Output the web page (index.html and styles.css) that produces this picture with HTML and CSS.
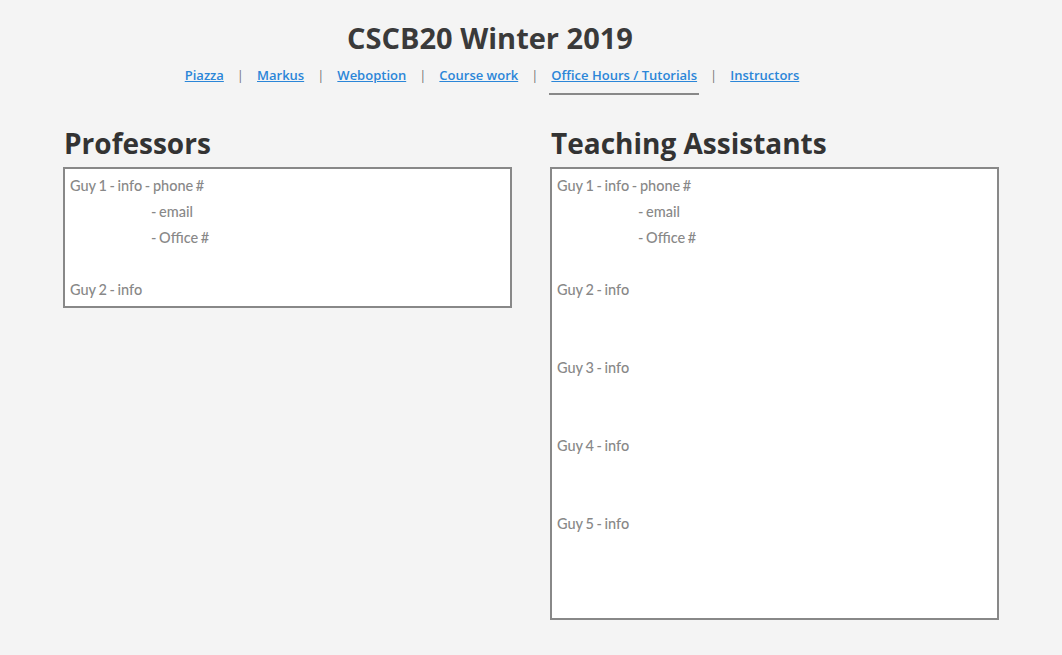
FILE: index.html
```html
<!DOCTYPE html>
<html>
<head>
<meta charset="utf-8">
<title>CSCB20 Winter 2019</title>
<link rel="stylesheet" href="styles.css">
</head>
<body>
<header class="header">
  <h1 class="title">CSCB20 Winter 2019</h1>
  <nav class="nav">
    <a class="nav-link" href="#">Piazza</a>
    <span class="nav-sep">|</span>
    <a class="nav-link" href="#">Markus</a>
    <span class="nav-sep">|</span>
    <a class="nav-link" href="#">Weboption</a>
    <span class="nav-sep">|</span>
    <a class="nav-link" href="#">Course work</a>
    <span class="nav-sep">|</span>
    <a class="nav-link active" href="#">Office Hours / Tutorials</a>
    <span class="nav-sep">|</span>
    <a class="nav-link" href="#">Instructors</a>
  </nav>
</header>
<main class="columns">
  <section class="column">
    <h2 class="heading">Professors</h2>
    <div class="box">
      <div class="line">Guy 1 - info - phone #</div>
      <div class="line indent">- email</div>
      <div class="line indent">- Office #</div>
      <div class="line"></div>
      <div class="line">Guy 2 - info</div>
    </div>
  </section>
  <section class="column">
    <h2 class="heading">Teaching Assistants</h2>
    <div class="box">
      <div class="line">Guy 1 - info - phone #</div>
      <div class="line indent">- email</div>
      <div class="line indent">- Office #</div>
      <div class="line"></div>
      <div class="line">Guy 2 - info</div>
      <div class="line"></div>
      <div class="line"></div>
      <div class="line">Guy 3 - info</div>
      <div class="line"></div>
      <div class="line"></div>
      <div class="line">Guy 4 - info</div>
      <div class="line"></div>
      <div class="line"></div>
      <div class="line">Guy 5 - info</div>
      <div class="line"></div>
      <div class="line"></div>
      <div class="line"></div>
    </div>
  </section>
</main>
</body>
</html>
```
FILE: styles.css
```css
html, body {
  margin: 0;
  padding: 0;
  background: #f4f4f4;
  font-family: "Open Sans", "Noto Sans", sans-serif;
}
.header {
  padding: 18px 82px 0 0;
  text-align: center;
}
.title {
  margin: 0;
  font-size: 29px;
  line-height: 40px;
  font-weight: 700;
  color: #3a3a3a;
}
.nav {
  display: flex;
  justify-content: center;
  align-items: flex-start;
  gap: 11px;
  margin-top: 8px;
  padding-left: 4px;
  font-size: 13px;
  line-height: 18px;
  font-weight: 600;
}
.nav-link {
  color: #2b86d8;
  text-decoration: underline;
  padding: 0 2px 9px;
}
.nav-link.active {
  border-bottom: 2px solid #888;
}
.nav-sep {
  color: #777;
  font-weight: 400;
}
.columns {
  display: flex;
  gap: 38px;
  padding: 29px 63px 0 63px;
}
.column {
  width: 449px;
}
.heading {
  margin: 0 0 5px 1px;
  font-size: 28px;
  line-height: 38px;
  font-weight: 700;
  color: #333;
}
.box {
  background: #fff;
  border: 2px solid #888;
  padding: 4px 5px 3px;
  color: #888;
  font-family: "Lato", "Open Sans", sans-serif;
  font-size: 14.5px;
  font-weight: 500;
  line-height: 26px;
  word-spacing: -1px;
}
.line {
  height: 26px;
  white-space: nowrap;
}
.indent {
  padding-left: 81px;
}
```
